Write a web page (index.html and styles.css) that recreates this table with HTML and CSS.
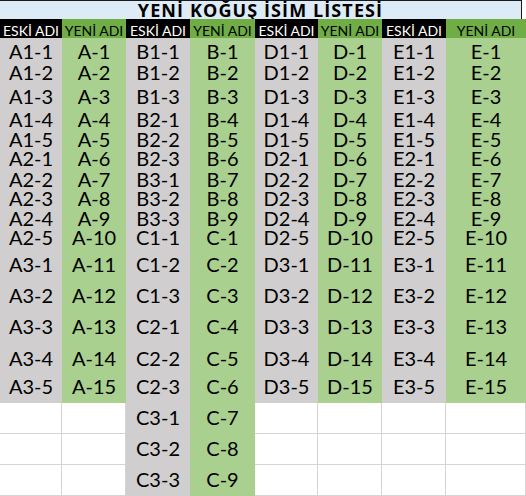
FILE: index.html
```html
<!DOCTYPE html>
<html>
<head>
  <meta charset="utf-8">
  <link rel="stylesheet" href="styles.css">
</head>
<body>
<div class="sheet">
  <div class="title">YENİ KOĞUŞ İSİM LİSTESİ</div>

  <div class="hd-old">ESKİ ADI</div><div class="hd-new">YENİ ADI</div>
  <div class="hd-old">ESKİ ADI</div><div class="hd-new">YENİ ADI</div>
  <div class="hd-old">ESKİ ADI</div><div class="hd-new">YENİ ADI</div>
  <div class="hd-old">ESKİ ADI</div><div class="hd-new">YENİ ADI</div>

  <div class="old">A1-1</div><div class="new">A-1</div><div class="old">B1-1</div><div class="new">B-1</div><div class="old">D1-1</div><div class="new">D-1</div><div class="old">E1-1</div><div class="new">E-1</div>
  <div class="old">A1-2</div><div class="new">A-2</div><div class="old">B1-2</div><div class="new">B-2</div><div class="old">D1-2</div><div class="new">D-2</div><div class="old">E1-2</div><div class="new">E-2</div>
  <div class="old">A1-3</div><div class="new">A-3</div><div class="old">B1-3</div><div class="new">B-3</div><div class="old">D1-3</div><div class="new">D-3</div><div class="old">E1-3</div><div class="new">E-3</div>
  <div class="old">A1-4</div><div class="new">A-4</div><div class="old">B2-1</div><div class="new">B-4</div><div class="old">D1-4</div><div class="new">D-4</div><div class="old">E1-4</div><div class="new">E-4</div>
  <div class="old">A1-5</div><div class="new">A-5</div><div class="old">B2-2</div><div class="new">B-5</div><div class="old">D1-5</div><div class="new">D-5</div><div class="old">E1-5</div><div class="new">E-5</div>
  <div class="old">A2-1</div><div class="new">A-6</div><div class="old">B2-3</div><div class="new">B-6</div><div class="old">D2-1</div><div class="new">D-6</div><div class="old">E2-1</div><div class="new">E-6</div>
  <div class="old">A2-2</div><div class="new">A-7</div><div class="old">B3-1</div><div class="new">B-7</div><div class="old">D2-2</div><div class="new">D-7</div><div class="old">E2-2</div><div class="new">E-7</div>
  <div class="old">A2-3</div><div class="new">A-8</div><div class="old">B3-2</div><div class="new">B-8</div><div class="old">D2-3</div><div class="new">D-8</div><div class="old">E2-3</div><div class="new">E-8</div>
  <div class="old">A2-4</div><div class="new">A-9</div><div class="old">B3-3</div><div class="new">B-9</div><div class="old">D2-4</div><div class="new">D-9</div><div class="old">E2-4</div><div class="new">E-9</div>
  <div class="old">A2-5</div><div class="new">A-10</div><div class="old">C1-1</div><div class="new">C-1</div><div class="old">D2-5</div><div class="new">D-10</div><div class="old">E2-5</div><div class="new">E-10</div>
  <div class="old">A3-1</div><div class="new">A-11</div><div class="old">C1-2</div><div class="new">C-2</div><div class="old">D3-1</div><div class="new">D-11</div><div class="old">E3-1</div><div class="new">E-11</div>
  <div class="old">A3-2</div><div class="new">A-12</div><div class="old">C1-3</div><div class="new">C-3</div><div class="old">D3-2</div><div class="new">D-12</div><div class="old">E3-2</div><div class="new">E-12</div>
  <div class="old">A3-3</div><div class="new">A-13</div><div class="old">C2-1</div><div class="new">C-4</div><div class="old">D3-3</div><div class="new">D-13</div><div class="old">E3-3</div><div class="new">E-13</div>
  <div class="old">A3-4</div><div class="new">A-14</div><div class="old">C2-2</div><div class="new">C-5</div><div class="old">D3-4</div><div class="new">D-14</div><div class="old">E3-4</div><div class="new">E-14</div>
  <div class="old">A3-5</div><div class="new">A-15</div><div class="old">C2-3</div><div class="new">C-6</div><div class="old">D3-5</div><div class="new">D-15</div><div class="old">E3-5</div><div class="new">E-15</div>

  <div class="blank"></div><div class="blank"></div><div class="old">C3-1</div><div class="new">C-7</div><div class="blank"></div><div class="blank"></div><div class="blank"></div><div class="blank"></div>
  <div class="blank"></div><div class="blank"></div><div class="old">C3-2</div><div class="new">C-8</div><div class="blank"></div><div class="blank"></div><div class="blank"></div><div class="blank"></div>
  <div class="blank"></div><div class="blank"></div><div class="old">C3-3</div><div class="new">C-9</div><div class="blank"></div><div class="blank"></div><div class="blank"></div><div class="blank"></div>
</div>
</body>
</html>
```

FILE: styles.css
```css
body {
  margin: 0;
  background-color: white;
  font-family: Lato, "Open Sans", sans-serif;
  color: black;
  overflow: hidden;
}

.sheet {
  display: grid;
  grid-template-columns: 62px 64px 64px 65px 63px 64px 64px 80px;
  grid-template-rows: 19px 19px 30px 21px 24px 23px 20px 19px 21px 19px 20px 19px 27px 31px 31px 32px 28px 31px 31px 31px;
  width: 526px;
}

.sheet > div {
  box-sizing: border-box;
  display: flex;
  align-items: flex-end;
  justify-content: center;
  white-space: nowrap;
}

/* titulo */
.title {
  grid-column: 1 / -1;
  margin-right: 4px;
  background-color: #ddebf7;
  border-top: 1px solid #1a1a1a;
  border-right: 1px solid #1a1a1a;
  font-family: "Open Sans", Lato, sans-serif;
  font-weight: bold;
  font-size: 18px;
  line-height: 18px;
  letter-spacing: 1.1px;
}

/* cabeceras */
.hd-old,
.hd-new {
  font-size: 14px;
  line-height: 15px;
}

.hd-old {
  background-color: black;
  color: white;
}

.hd-new {
  background-color: #70ad47;
  color: black;
}

/* celdas */
.old,
.new {
  font-size: 20px;
  line-height: 14px;
  padding-bottom: 10px;
}

.old {
  background-color: #d0cece;
}

.new {
  background-color: #a9d08e;
}

.blank {
  border-right: 1px solid #d4d4d4;
  border-bottom: 1px solid #d4d4d4;
}
```
